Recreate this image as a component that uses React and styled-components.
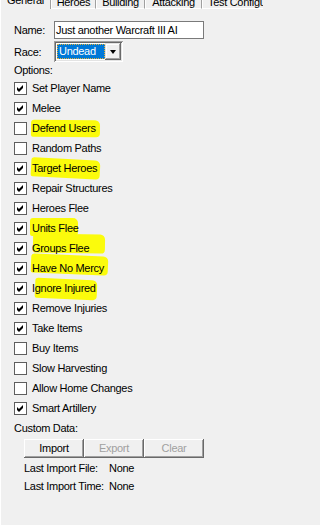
import React from "react";
import styled, { createGlobalStyle } from "styled-components";

const Global = createGlobalStyle`
  html, body {
    margin: 0;
    padding: 0;
    background: #f0f0f0;
    overflow: hidden;
  }
  body {
    font-family: "Liberation Sans", Arial, sans-serif;
    font-size: 11px;
    letter-spacing: -0.3px;
    color: #000;
  }
`;

const Window = styled.div`
  width: 263px;
  height: 525px;
  overflow: hidden;
  display: flex;
  flex-direction: column;
  background: #f0f0f0;
`;

const TabStrip = styled.div`
  display: flex;
  margin-top: -10px;
  height: 19px;
  overflow: hidden;
  flex-shrink: 0;
`;

const Tab = styled.div`
  box-sizing: border-box;
  flex-shrink: 0;
  width: ${(p) => p.$w}px;
  border-left: 1px solid #fff;
  border-top: 1px solid #fff;
  border-right: 1px solid #a0a0a0;
  border-bottom: ${(p) => (p.$active ? "none" : "1px solid #fff")};
  padding-top: ${(p) => (p.$active ? 3 : 5)}px;
  padding-left: ${(p) => (p.$left ? 5 : 0)}px;
  text-align: ${(p) => (p.$left ? "left" : "center")};
  line-height: 13px;
  white-space: nowrap;
  overflow: hidden;
`;

const Panel = styled.div`
  flex: 1;
  border-left: 1px solid #fff;
  padding-left: 13px;
  display: flex;
  flex-direction: column;
`;

const FieldRow = styled.div`
  display: flex;
  align-items: center;
  height: ${(p) => p.$h}px;
  margin-top: ${(p) => p.$mt}px;
`;

const FieldLabel = styled.span`
  width: 40px;
  flex-shrink: 0;
`;

const TextBox = styled.div`
  box-sizing: border-box;
  width: 150px;
  height: 18px;
  border: 1px solid #7a7a7a;
  background: #fff;
  padding-left: 1px;
  line-height: 16px;
  white-space: nowrap;
  overflow: hidden;
`;

const Combo = styled.div`
  box-sizing: border-box;
  width: 69px;
  height: 21px;
  padding: 2px;
  background: #fff;
  box-shadow: inset 1px 1px #a0a0a0, inset -1px -1px #fff, inset 2px 2px #696969,
    inset -2px -2px #e3e3e3;
  display: flex;
  align-items: flex-start;
`;

const Selection = styled.div`
  box-sizing: border-box;
  margin: 1px 0 0 1px;
  width: 48px;
  height: 15px;
  background: #0078d7;
  color: #fff;
  border: 1px dotted #e2b23c;
  padding-left: 1px;
  line-height: 13px;
`;

const DropButton = styled.div`
  box-sizing: border-box;
  width: 16px;
  height: 17px;
  background: #f0f0f0;
  box-shadow: inset -1px -1px #696969, inset 1px 1px #e3e3e3, inset -2px -2px #a0a0a0,
    inset 2px 2px #fff;
  display: flex;
  align-items: center;
  justify-content: center;
`;

const Arrow = styled.div`
  width: 0;
  height: 0;
  border-left: 3.5px solid transparent;
  border-right: 3.5px solid transparent;
  border-top: 4px solid #000;
  margin-top: 1px;
`;

const SectionLabel = styled.div`
  height: ${(p) => p.$h}px;
  line-height: ${(p) => p.$h}px;
`;

const CheckRow = styled.div`
  display: flex;
  align-items: center;
  gap: 5px;
  height: 20px;
`;

const Box = styled.div`
  box-sizing: border-box;
  width: 13px;
  height: 13px;
  border: 1px solid #5e5e5e;
  background: #fff;
  flex-shrink: 0;
  display: flex;
`;

const Label = styled.span`
  position: relative;
  isolation: isolate;
  height: 20px;
  line-height: 20px;
  white-space: nowrap;
`;

const Mark = styled.span`
  position: absolute;
  z-index: -1;
  left: ${(p) => p.$l}px;
  top: ${(p) => p.$t}px;
  width: ${(p) => p.$w}px;
  height: ${(p) => p.$h}px;
  background: #fbfb0c;
  border-radius: 3px 5px 4px 2px;
  transform: rotate(${(p) => p.$r}deg);
`;

const ButtonRow = styled.div`
  display: flex;
  margin: 1px 0 0 10px;
`;

const Button = styled.div`
  box-sizing: border-box;
  width: 60px;
  height: 19px;
  background: #f0f0f0;
  box-shadow: inset -1px -1px #696969, inset 1px 1px #fff, inset -2px -2px #a0a0a0,
    inset 2px 2px #f0f0f0;
  text-align: center;
  line-height: 18px;
  color: ${(p) => (p.$disabled ? "#a0a0a0" : "#000")};
`;

const InfoGrid = styled.div`
  display: grid;
  grid-template-columns: 85px auto;
  grid-auto-rows: 18px;
  align-items: center;
  margin: 1px 0 0 10px;
`;

const Check = () => (
  <svg width="11" height="11" viewBox="0 0 11 11">
    <path d="M2 4 L4 6 L8 2 L8 5 L4 9 L2 7 Z" fill="#000" />
  </svg>
);

const options = [
  { label: "Set Player Name", on: true },
  { label: "Melee", on: true },
  { label: "Defend Users", on: false, mark: { l: -1, t: 2, w: 69, h: 17, r: 0.5 } },
  { label: "Random Paths", on: false },
  { label: "Target Heroes", on: true, mark: { l: -1, t: 1, w: 69, h: 19, r: 3 } },
  { label: "Repair Structures", on: true },
  { label: "Heroes Flee", on: true },
  { label: "Units Flee", on: true, mark: { l: -2, t: 0, w: 48, h: 18, r: 0 } },
  { label: "Groups Flee", on: true, mark: { l: 1, t: -4, w: 72, h: 19, r: 1 } },
  { label: "Have No Mercy", on: true, mark: { l: -1, t: -3, w: 77, h: 19, r: 2.5 } },
  { label: "Ignore Injured", on: true, mark: { l: 3, t: 1, w: 62, h: 20, r: 2.5 } },
  { label: "Remove Injuries", on: true },
  { label: "Take Items", on: true },
  { label: "Buy Items", on: false },
  { label: "Slow Harvesting", on: false },
  { label: "Allow Home Changes", on: false },
  { label: "Smart Artillery", on: true },
];

const tabs = [
  { label: "General", w: 51, active: true },
  { label: "Heroes", w: 45 },
  { label: "Building", w: 49 },
  { label: "Attacking", w: 57 },
  { label: "Test Configuration", w: 110, left: true },
];

export default function App() {
  return (
    <>
      <Global />
      <Window>
        <TabStrip>
          {tabs.map((t) => (
            <Tab key={t.label} $w={t.w} $active={t.active} $left={t.left}>
              {t.label}
            </Tab>
          ))}
        </TabStrip>
        <Panel>
          <FieldRow $h={18} $mt={12}>
            <FieldLabel>Name:</FieldLabel>
            <TextBox>Just another Warcraft III AI</TextBox>
          </FieldRow>
          <FieldRow $h={21} $mt={2}>
            <FieldLabel>Race:</FieldLabel>
            <Combo>
              <Selection>Undead</Selection>
              <DropButton>
                <Arrow />
              </DropButton>
            </Combo>
          </FieldRow>
          <SectionLabel $h={16}>Options:</SectionLabel>
          {options.map((o) => (
            <CheckRow key={o.label}>
              <Box>{o.on && <Check />}</Box>
              <Label>
                {o.mark && (
                  <Mark $l={o.mark.l} $t={o.mark.t} $w={o.mark.w} $h={o.mark.h} $r={o.mark.r} />
                )}
                {o.label}
              </Label>
            </CheckRow>
          ))}
          <SectionLabel $h={20}>Custom Data:</SectionLabel>
          <ButtonRow>
            <Button>Import</Button>
            <Button $disabled>Export</Button>
            <Button $disabled>Clear</Button>
          </ButtonRow>
          <InfoGrid>
            <span>Last Import File:</span>
            <span>None</span>
            <span>Last Import Time:</span>
            <span>None</span>
          </InfoGrid>
        </Panel>
      </Window>
    </>
  );
}
